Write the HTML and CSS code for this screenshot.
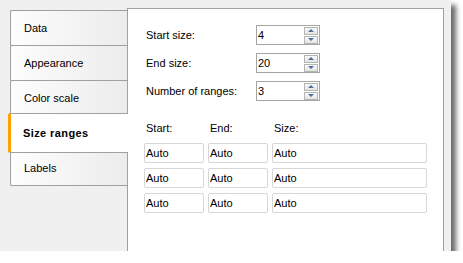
FILE: index.html
```html
<!DOCTYPE html>
<html lang="en">

<head>
    <meta charset="UTF-8">
    <title>Size ranges</title>
    <link rel="stylesheet" href="styles.css">
</head>

<body>
    <div class="window">
        <div class="tabs">
            <div class="tab">Data</div>
            <div class="tab">Appearance</div>
            <div class="tab">Color scale</div>
            <div class="tab selected">Size ranges</div>
            <div class="tab">Labels</div>
        </div>

        <div class="panel">
            <div class="field">
                <span class="label">Start size:</span>
                <div class="spin">
                    <span class="value">4</span>
                    <div class="spin-buttons">
                        <div class="spin-btn up"></div>
                        <div class="spin-btn down"></div>
                    </div>
                </div>
            </div>
            <div class="field">
                <span class="label">End size:</span>
                <div class="spin">
                    <span class="value">20</span>
                    <div class="spin-buttons">
                        <div class="spin-btn up"></div>
                        <div class="spin-btn down"></div>
                    </div>
                </div>
            </div>
            <div class="field">
                <span class="label">Number of ranges:</span>
                <div class="spin">
                    <span class="value">3</span>
                    <div class="spin-buttons">
                        <div class="spin-btn up"></div>
                        <div class="spin-btn down"></div>
                    </div>
                </div>
            </div>

            <div class="ranges">
                <div class="head">Start:</div>
                <div class="head">End:</div>
                <div class="head">Size:</div>

                <div class="box">Auto</div>
                <div class="box">Auto</div>
                <div class="box">Auto</div>

                <div class="box">Auto</div>
                <div class="box">Auto</div>
                <div class="box">Auto</div>

                <div class="box">Auto</div>
                <div class="box">Auto</div>
                <div class="box">Auto</div>
            </div>
        </div>
    </div>
</body>

</html>
```

FILE: styles.css
```css
body {
    margin: 0;
    background-color: #ffffff;
    font-family: "Liberation Sans", Arial, sans-serif;
    font-size: 11px;
    color: #000000;
}

.window {
    width: 451px;
    height: 251px;
    background-color: #f0f0f0;
    box-shadow: 5px 5px 5px #6a6a6a;
    display: flex;
    padding-top: 8px;
    box-sizing: border-box;
    overflow: hidden;
}

/* tab column on the left */
.tabs {
    width: 120px;
    margin-left: 8px;
    margin-right: -1px;
    padding-top: 2px;
    display: flex;
    flex-direction: column;
}

.tab {
    height: 36px;
    width: 117px;
    margin-left: 2px;
    margin-top: -1px;
    box-sizing: border-box;
    border: 1px solid #a0a0a0;
    border-right: none;
    border-radius: 2px 0 0 2px;
    background: linear-gradient(to right, #fdfdfd, #ececec);
    padding-left: 13px;
    display: flex;
    align-items: center;
}

.tab:first-child {
    margin-top: 0;
}

.tab.selected {
    position: relative;
    z-index: 1;
    width: 120px;
    height: 40px;
    margin-left: 0;
    margin-top: -3px;
    margin-bottom: -2px;
    background: #ffffff;
    border-left: 3px solid #ffa200;
    padding-left: 12px;
    font-weight: bold;
    letter-spacing: 0.4px;
}

/* content panel */
.panel {
    width: 317px;
    height: 250px;
    box-sizing: border-box;
    background-color: #ffffff;
    border: 1px solid #a0a0a0;
    border-bottom: none;
    padding: 16px 0 0 18px;
}

.field {
    display: flex;
    align-items: center;
    height: 20px;
    margin-bottom: 8px;
}

.label {
    width: 110px;
}

.spin {
    width: 64px;
    height: 20px;
    box-sizing: border-box;
    border: 1px solid #a5a5a5;
    display: flex;
    align-items: center;
    justify-content: space-between;
    padding: 0 1px 0 1px;
}

.spin-buttons {
    display: flex;
    flex-direction: column;
    gap: 1px;
}

.spin-btn {
    width: 14px;
    height: 8px;
    box-sizing: border-box;
    border: 1px solid #b4b4b4;
    background: linear-gradient(#fafafa, #e4e4e4);
    display: flex;
    align-items: center;
    justify-content: center;
}

.spin-btn.up::after {
    content: "";
    border-left: 3px solid transparent;
    border-right: 3px solid transparent;
    border-bottom: 3px solid #5469a0;
}

.spin-btn.down::after {
    content: "";
    border-left: 3px solid transparent;
    border-right: 3px solid transparent;
    border-top: 3px solid #5469a0;
}

/* start / end / size table */
.ranges {
    display: grid;
    grid-template-columns: 60px 60px 155px;
    grid-template-rows: 16px 20px 20px 20px;
    column-gap: 4px;
    row-gap: 5px;
    margin-top: 21px;
    margin-left: -2px;
}

.head {
    padding-left: 2px;
    margin-bottom: 5px;
    display: flex;
    align-items: center;
}

.box {
    border: 1px solid #d6d6d6;
    border-radius: 2px;
    box-sizing: border-box;
    padding-left: 1px;
    display: flex;
    align-items: center;
}
```
